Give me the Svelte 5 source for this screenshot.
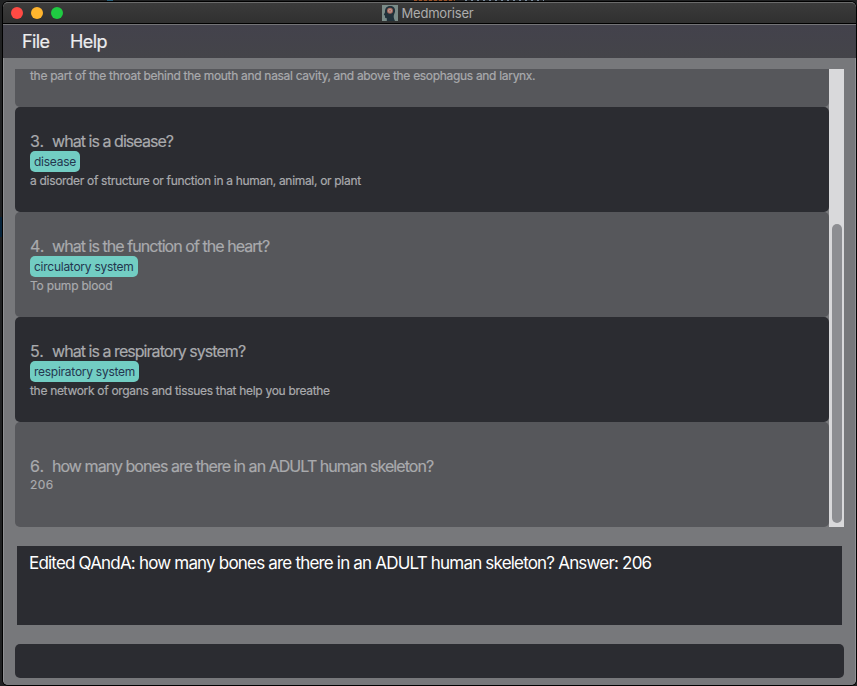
<script>
  const cards = [
    { id: 2, dark: false, clipped: true, answer: 'the part of the throat behind the mouth and nasal cavity, and above the esophagus and larynx.' },
    { id: 3, dark: true, question: 'what is a disease?', tag: 'disease', answer: 'a disorder of structure or function in a human, animal, or plant' },
    { id: 4, dark: false, question: 'what is the function of the heart?', tag: 'circulatory system', answer: 'To pump blood' },
    { id: 5, dark: true, question: 'what is a respiratory system?', tag: 'respiratory system', answer: 'the network of organs and tissues that help you breathe' },
    { id: 6, dark: false, question: 'how many bones are there in an ADULT human skeleton?', answer: '206' }
  ];
  const result = 'Edited QAndA: how many bones are there in an ADULT human skeleton? Answer: 206';
</script>

<div class="desktop">
  <i class="peek blue"></i><i class="peek orange"></i><i class="peek pale"></i><i class="peek side"></i>
  <div class="window">
    <header>
      <div class="lights"><i class="red"></i><i class="yellow"></i><i class="green"></i></div>
      <div class="name">
        <svg width="16" height="16" viewBox="0 0 16 16">
          <rect width="16" height="16" fill="#7b8c89" />
          <path d="M4.800 16V13.300L3.200 13 2.900 10.500 1.800 9.800 3 7.200C2.800 3.200 4.800 1 8 1c3.300 0 5.200 2 5.100 4.900-.1 2.200-1.500 3.500-1.400 5.500.1 1.600.5 2.800 1.300 4.600z" fill="#22323b" />
          <circle cx="8" cy="5.700" r="3" fill="#a5655a" />
          <circle cx="8" cy="5.700" r="2" fill="#b9a097" />
          <circle cx="8" cy="5.700" r="1" fill="#b8675c" />
        </svg>
        <span>Medmoriser</span>
      </div>
    </header>
    <nav><span class="file">File</span><span class="help">Help</span></nav>
    <main>
      <section class="list">
        <div class="cards">
          {#each cards as card (card.id)}
            <article class:dark={card.dark} class:clipped={card.clipped} class:untagged={!card.tag && !card.clipped}>
              {#if card.question}
                <h2><span class="num">{card.id}.</span><span>{card.question}</span></h2>
              {/if}
              {#if card.tag}<span class="tag">{card.tag}</span>{/if}
              <p class:short={card.answer.length < 20}><span>{card.answer}</span></p>
            </article>
          {/each}
        </div>
        <div class="track"><div class="thumb"></div></div>
      </section>
      <section class="result"><span>{result}</span></section>
      <div class="command"></div>
    </main>
  </div>
</div>

<style>
  :global(body) { margin: 0; background: #242526; }
  * { box-sizing: border-box; }
  .desktop {
    position: relative;
    width: 857px;
    height: 686px;
    padding: 2px 1px 1px 3px;
    overflow: hidden;
    background: #202122;
    font-family: Inter, "Liberation Sans", sans-serif;
  }
  .peek { position: absolute; top: 0; height: 1px; }
  .blue { left: 107px; width: 6px; background: #28617c; }
  .orange { left: 414px; width: 41px; background: repeating-linear-gradient(90deg, #9a5228 0 3px, #35261d 3px 5px); }
  .pale { left: 465px; width: 79px; background: repeating-linear-gradient(90deg, #78899a 0 2px, #25282b 2px 6px); }
  .side { left: 0; top: 217px; width: 2px; height: 20px; background: #06243c; }
  .window {
    display: flex;
    flex-direction: column;
    height: 683px;
    overflow: hidden;
    border-radius: 5px;
    background: #77787b;
    box-shadow: 0 0 0 1px #000;
  }
  header {
    position: relative;
    flex: none;
    display: flex;
    align-items: center;
    justify-content: center;
    height: 22px;
    border-top: 1px solid #6b6b6b;
    border-bottom: 1px solid #000;
    border-radius: 5px 5px 0 0;
    background: linear-gradient(#3b3b3b, #303030);
  }
  .lights { position: absolute; left: 8px; top: 4px; display: flex; gap: 8px; }
  .lights i { width: 12px; height: 12px; border-radius: 50%; }
  .red { background: #ff4a44; }
  .yellow { background: #ffb52e; }
  .green { background: #1fca42; }
  .name { display: flex; align-items: center; gap: 4px; width: 96px; color: #adadad; font-size: 13px; line-height: 16px; }
  .name span { letter-spacing: -0.2px; }
  nav {
    flex: none;
    display: flex;
    height: 34px;
    padding-left: 19px;
    border-top: 1px solid #747477;
    background: linear-gradient(#43424c, #444449);
    color: #ececee;
    font-size: 18px;
    line-height: 34px;
    letter-spacing: -0.6px;
    -webkit-text-stroke: 0.2px;
  }
  .file { width: 48px; }
  main {
    flex: 1;
    display: flex;
    flex-direction: column;
    padding: 11px 12px 7px 11px;
    border: solid #8f9093;
    border-width: 0 1px 1px 1px;
    border-radius: 0 0 5px 5px;
    background: #77787b;
  }
  .list { flex: none; display: flex; width: 829px; height: 458px; }
  .cards { width: 814px; }
  article {
    display: flex;
    flex-direction: column;
    align-items: flex-start;
    justify-content: center;
    height: 105px;
    padding: 0 15px;
    border-radius: 5px;
    background: #56575b;
    color: #a9aaad;
    -webkit-text-stroke: 0.2px;
  }
  article.dark { background: #2b2c31; }
  article.untagged { padding-bottom: 2px; }
  article.clipped { height: 38px; justify-content: flex-start; border-radius: 0 0 5px 5px; }
  h2 { display: flex; height: 20px; margin: 0; font-size: 16px; font-weight: 400; line-height: 20px; letter-spacing: -0.95px; word-spacing: 0; white-space: nowrap; }
  .num { width: 22px; letter-spacing: 0; }
  .tag {
    height: 21px;
    padding: 0 4px;
    border-radius: 5px;
    background: #72cdc3;
    color: #24364f;
    font-size: 12px;
    line-height: 21px;
    letter-spacing: -0.26px;
    -webkit-text-stroke: 0;
  }
  p { height: 16px; margin: 0; font-size: 12px; line-height: 17px; letter-spacing: -0.31px; white-space: nowrap; }
  p.short { letter-spacing: -0.2px; }
  .untagged p.short { letter-spacing: 0.4px; }
  .clipped p { line-height: 14px; }
  .track { width: 15px; padding: 155px 2px 4px 3px; background: #d9d9db; }
  .thumb { width: 10px; height: 299px; border-radius: 5px; background: #8d8e92; }
  .result {
    flex: none;
    width: 825px;
    height: 79px;
    margin: 19px 0 19px 2px;
    padding: 7px 12px;
    background: #2b2c31;
    color: #fff;
    font-size: 17px;
    line-height: 20px;
    letter-spacing: -0.81px;
    white-space: nowrap;
  }
  .command { flex: none; width: 829px; height: 34px; border-radius: 5px; background: #2b2c31; }
</style>
